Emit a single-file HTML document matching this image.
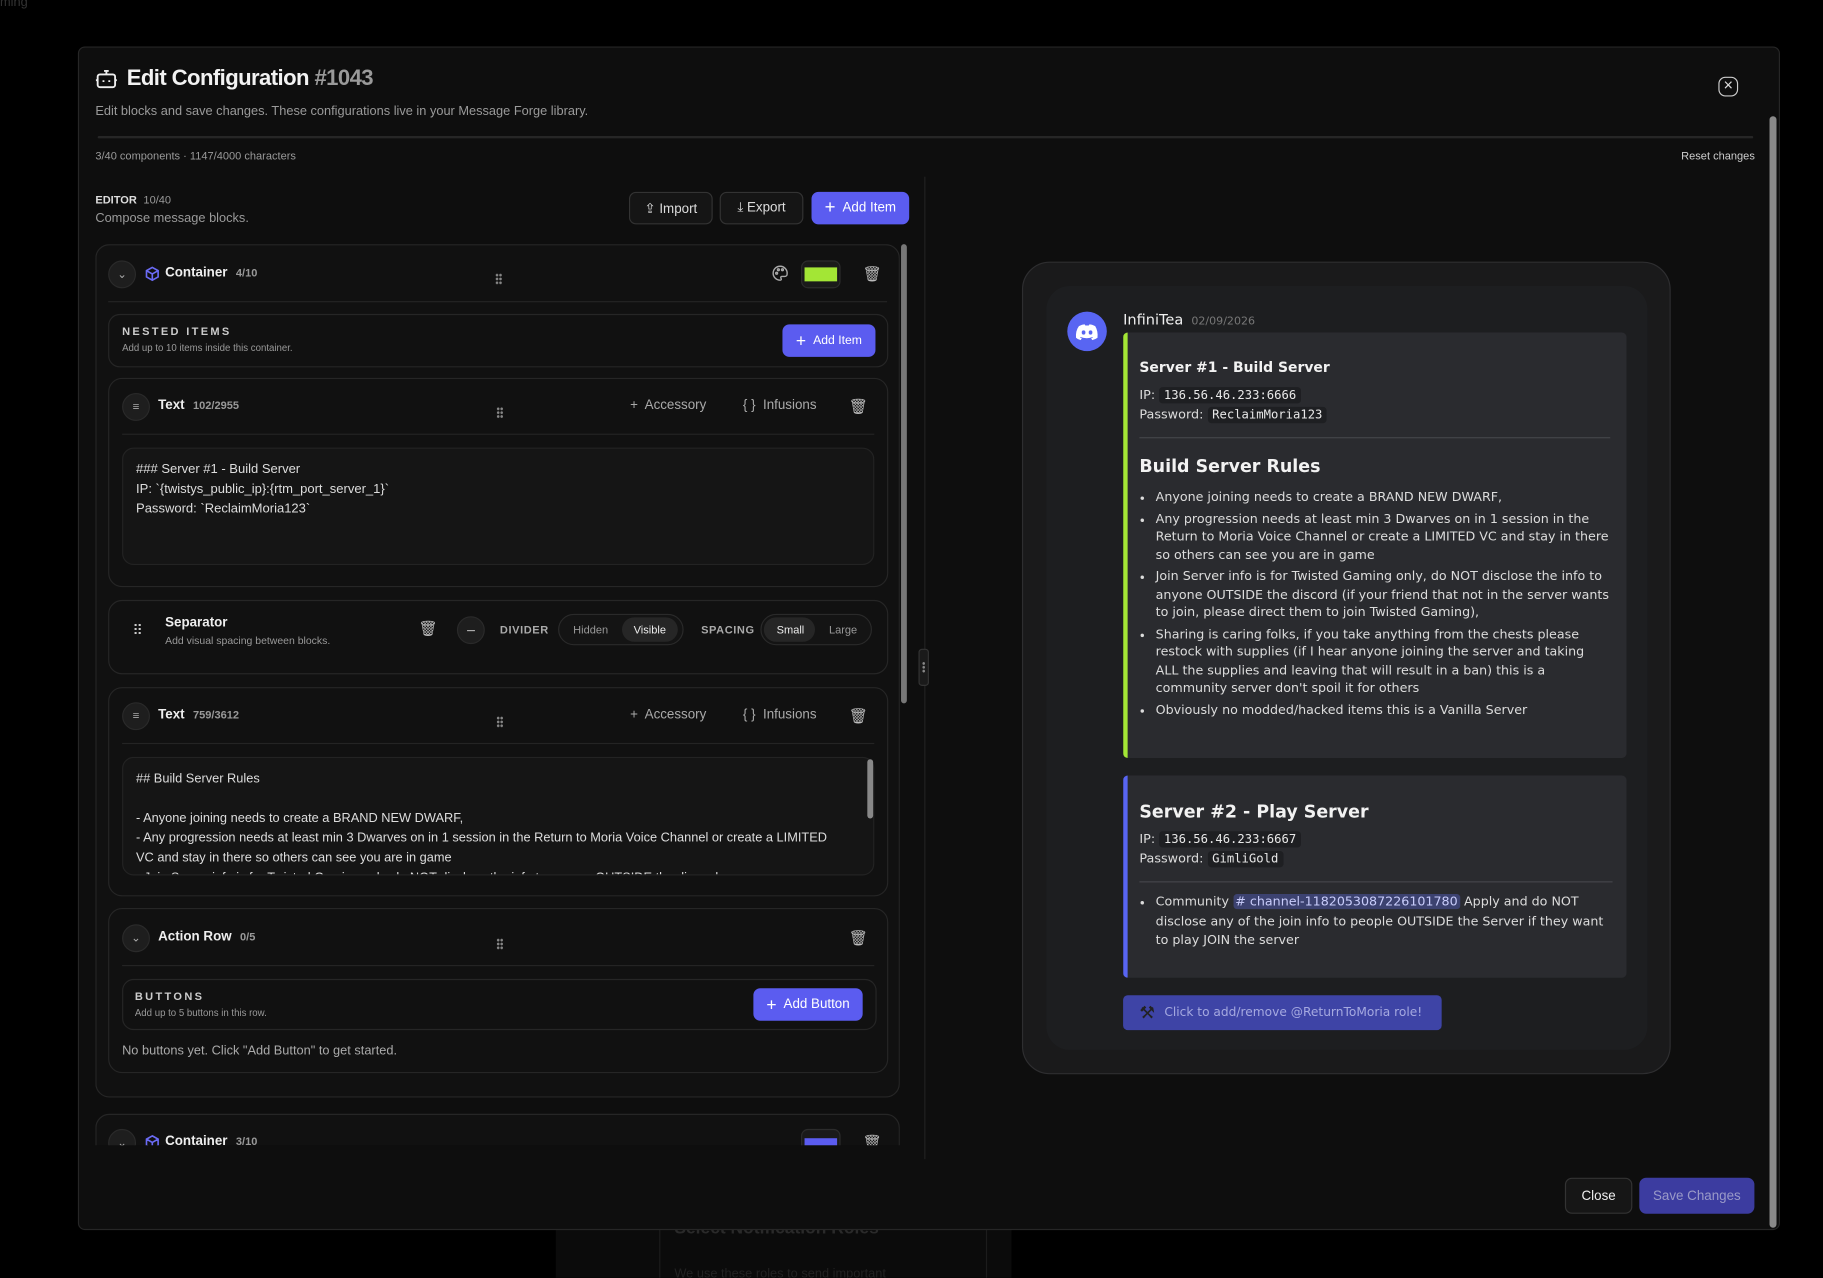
<!DOCTYPE html>
<html><head><meta charset="utf-8">
<style>
html,body{margin:0;padding:0;background:#000;width:1823px;height:1278px;overflow:hidden}
#w{position:absolute;left:0;top:0;width:1568px;height:1099px;transform:scale(1.16263);transform-origin:0 0;font-family:"Liberation Sans",sans-serif;color:#e6e6e6;background:#000;border-radius:0 0 22px 22px;overflow:hidden}
.a{position:absolute}
.modal{left:67px;top:40px;width:1462px;height:1016px;background:#0e0e0e;border:1px solid #262626;border-radius:6px}
.g{color:#9a9a9a}
.btn{position:absolute;border:1px solid #333;background:#151515;border-radius:6px;font-size:11.5px;display:flex;align-items:center;justify-content:center;gap:6px;color:#ddd}
.blue{background:#5b5cf0;border-color:#5b5cf0;color:#fff}
.card{position:absolute;border:1px solid #262626;border-radius:12px;background:#111}
.ln{position:absolute;height:1px;background:#242424}
.t12b{font-size:11.5px;font-weight:bold;color:#eee}
.sm{font-size:9.5px;color:#999}
.circ{position:absolute;width:22px;height:22px;border-radius:50%;background:#1e1e1e;border:1px solid #2a2a2a;display:flex;align-items:center;justify-content:center;color:#aaa;font-size:10px}
.dots{position:absolute;width:6px;height:10px;background:radial-gradient(circle,#888 1px,transparent 1.3px) 0 0/3px 3.3px}
.ta{position:absolute;background:#151515;border:1px solid #232323;border-radius:10px;font-size:11.2px;color:#ddd;line-height:17px;padding:10px 11px;box-sizing:border-box;overflow:hidden}
.d{font-family:"DejaVu Sans",sans-serif}
.code{font-family:"DejaVu Sans Mono",monospace;background:#1e1f22;padding:1px 4px;border-radius:3px;font-size:10.5px;color:#e8e8e8}
ul{margin:0;padding-left:14px}
li{margin-bottom:3px}
.tr{font-size:13px;color:#bbb}
</style></head><body><div id="w">
<div class="a" style="left:0;top:-4px;font-size:11px;color:#333">ming</div>
<div class="a" style="left:478px;top:1040px;width:392px;height:70px;background:#0b0b0b"></div>
<div class="a" style="left:567px;top:1040px;width:280px;height:70px;border-left:1px solid #1c1c1c;border-right:1px solid #1c1c1c"></div>
<div class="a" style="left:580px;top:1048px;font-size:15px;font-weight:bold;color:#2a2a2a">Select Notification Roles</div>
<div class="a" style="left:580px;top:1090px;font-size:11px;color:#222">We use these roles to send important</div>

<div class="a modal"></div>
<svg class="a" style="left:82px;top:59px" width="19" height="18" viewBox="0 0 19 18" fill="none" stroke="#eee" stroke-width="1.6"><rect x="2" y="5" width="15" height="11" rx="2"/><path d="M9.5 5V2M7.5 2h4M7 10v1.5M12 10v1.5M0.5 10h1.5M17 10h1.5"/></svg>
<div class="a" style="left:109px;top:57px;font-size:19px;font-weight:bold;color:#f2f2f2;letter-spacing:-0.5px">Edit Configuration <span style="color:#9a9a9a">#1043</span></div>
<div class="a g" style="left:82px;top:90px;font-size:11px">Edit blocks and save changes. These configurations live in your Message Forge library.</div>
<div class="a" style="left:84px;top:117px;width:1424px;height:2px;background:#262626;border-radius:1px"></div>
<div class="a g" style="left:82px;top:129px;font-size:9.5px">3/40 components · 1147/4000 characters</div>
<div class="a" style="left:1446px;top:129px;font-size:9.5px;color:#ccc">Reset changes</div>
<div class="a" style="left:1478px;top:66px;width:17px;height:17px;border:1.5px solid #ccc;border-radius:6px;box-sizing:border-box;color:#ddd;font-size:14px;line-height:13px;text-align:center">×</div>
<div class="a" style="left:1522px;top:100px;width:6px;height:956px;background:#8a8a8a;border-radius:3px"></div>

<div class="a" style="left:82px;top:167px;font-size:9.5px;font-weight:bold;color:#ddd">EDITOR <span style="font-weight:normal;color:#999;margin-left:3px">10/40</span></div>
<div class="a g" style="left:82px;top:182px;font-size:11px">Compose message blocks.</div>
<div class="btn" style="left:541px;top:165px;width:70px;height:26px">⇪ Import</div>
<div class="btn" style="left:619px;top:165px;width:70px;height:26px">⤓ Export</div>
<div class="btn blue" style="left:698px;top:165px;width:82px;height:26px"><span style="font-size:16px">+</span> Add Item</div>

<div class="a" style="left:795px;top:152px;width:1px;height:845px;background:#222"></div>
<div class="a" style="left:790px;top:558px;width:9px;height:32px;background:#1a1a1a;border:1px solid #333;border-radius:3px;box-sizing:border-box"></div>
<div class="dots" style="left:793px;top:569px;width:3px"></div>

<div class="a" style="left:775px;top:210px;width:5px;height:395px;background:#777;border-radius:3px"></div>
<div class="a" style="left:82px;top:210px;width:692px;height:775px;overflow:hidden">
 <div class="card" style="left:0;top:0;width:690px;height:732px">
  <div class="circ" style="left:10px;top:13px">⌄</div>
  <svg class="a" style="left:42px;top:18px" width="12" height="13" viewBox="0 0 12 13" fill="none" stroke="#6b6bf5" stroke-width="1.4"><path d="M6 1l5 2.8v5.4L6 12 1 9.2V3.8zM1 3.8l5 2.8 5-2.8M6 6.6V12"/></svg>
  <div class="a t12b" style="left:59px;top:18px">Container <span class="sm" style="margin-left:4px">4/10</span></div>
  <div class="dots" style="left:343px;top:24px"></div>
  <svg class="a" style="left:581px;top:17px" width="14" height="14" viewBox="0 0 14 14" fill="none" stroke="#aaa" stroke-width="1.2"><path d="M7 1a6 6 0 1 0 0 12c1 0 1.3-.8.8-1.5s-.3-1.7.7-1.7H11a2 2 0 0 0 2-2A6 6 0 0 0 7 1z"/><circle cx="4" cy="7" r=".8"/><circle cx="5.5" cy="4" r=".8"/><circle cx="9" cy="4" r=".8"/></svg>
  <div class="a" style="left:606px;top:13px;width:34px;height:24px;background:#1a1a1a;border:1px solid #2c2c2c;border-radius:6px;box-sizing:border-box"></div>
  <div class="a" style="left:609px;top:19px;width:28px;height:12px;background:#a3e635"></div>
  <div class="a tr" style="left:659px;top:17px">🗑︎</div>
  <div class="ln" style="left:10px;top:48px;width:670px"></div>

  <div class="card" style="left:10px;top:59px;width:669px;height:44px;border-radius:10px;background:#111">
   <div class="a" style="left:11px;top:9px;font-size:9.5px;font-weight:bold;letter-spacing:2px;color:#ccc">NESTED ITEMS</div>
   <div class="a" style="left:11px;top:23px;font-size:8.3px;color:#999">Add up to 10 items inside this container.</div>
   <div class="btn blue" style="left:579px;top:8px;width:78px;height:26px;font-size:10.5px"><span style="font-size:15px">+</span> Add Item</div>
  </div>

  <div class="card" style="left:10px;top:114px;width:669px;height:178px">
   <div class="circ" style="left:11px;top:12px">≡</div>
   <div class="a t12b" style="left:42px;top:17px">Text <span class="sm" style="margin-left:4px">102/2955</span></div>
   <div class="dots" style="left:333px;top:24px"></div>
   <div class="a" style="left:448px;top:17px;font-size:11.5px;color:#aaa">+&nbsp; Accessory</div>
   <div class="a" style="left:545px;top:17px;font-size:11.5px;color:#aaa">{ }&nbsp; Infusions</div>
   <div class="a tr" style="left:636px;top:16px">🗑︎</div>
   <div class="ln" style="left:11px;top:47px;width:647px"></div>
   <div class="ta" style="left:11px;top:59px;width:647px;height:101px">### Server #1 - Build Server<br>IP: `{twistys_public_ip}:{rtm_port_server_1}`<br>Password: `ReclaimMoria123`</div>
  </div>

  <div class="card" style="left:10px;top:305px;width:669px;height:62px">
   <div class="a" style="left:20px;top:18px;font-size:12px;color:#ccc;letter-spacing:-1px">⠿</div>
   <div class="a t12b" style="left:48px;top:13px">Separator</div>
   <div class="a sm" style="left:48px;top:29px;font-size:9px">Add visual spacing between blocks.</div>
   <div class="a tr" style="left:266px;top:16px">🗑︎</div>
   <div class="circ" style="left:299px;top:13px;font-size:14px">−</div>
   <div class="a" style="left:336px;top:20px;font-size:9.5px;font-weight:bold;color:#aaa;letter-spacing:.5px">DIVIDER</div>
   <div class="a" style="left:386px;top:11px;width:108px;height:27px;border:1px solid #2a2a2a;border-radius:14px;background:#141414;box-sizing:border-box"></div>
   <div class="a" style="left:399px;top:20px;font-size:9.5px;color:#999">Hidden</div>
   <div class="a" style="left:441px;top:14px;width:48px;height:21px;border-radius:11px;background:#262626"></div>
   <div class="a" style="left:451px;top:20px;font-size:9.5px;color:#eee">Visible</div>
   <div class="a" style="left:509px;top:20px;font-size:9.5px;font-weight:bold;color:#aaa;letter-spacing:.5px">SPACING</div>
   <div class="a" style="left:560px;top:11px;width:96px;height:27px;border:1px solid #2a2a2a;border-radius:14px;background:#141414;box-sizing:border-box"></div>
   <div class="a" style="left:563px;top:14px;width:44px;height:21px;border-radius:11px;background:#262626"></div>
   <div class="a" style="left:574px;top:20px;font-size:9.5px;color:#eee">Small</div>
   <div class="a" style="left:619px;top:20px;font-size:9.5px;color:#999">Large</div>
  </div>

  <div class="card" style="left:10px;top:380px;width:669px;height:178px">
   <div class="circ" style="left:11px;top:12px">≡</div>
   <div class="a t12b" style="left:42px;top:17px">Text <span class="sm" style="margin-left:4px">759/3612</span></div>
   <div class="dots" style="left:333px;top:24px"></div>
   <div class="a" style="left:448px;top:17px;font-size:11.5px;color:#aaa">+&nbsp; Accessory</div>
   <div class="a" style="left:545px;top:17px;font-size:11.5px;color:#aaa">{ }&nbsp; Infusions</div>
   <div class="a tr" style="left:636px;top:16px">🗑︎</div>
   <div class="ln" style="left:11px;top:47px;width:647px"></div>
   <div class="ta" style="left:11px;top:59px;width:647px;height:102px;font-size:11px;padding-right:24px">## Build Server Rules<br><br>- Anyone joining needs to create a BRAND NEW DWARF,<br>- Any progression needs at least min 3 Dwarves on in 1 session in the Return to Moria Voice Channel or create a LIMITED VC and stay in there so others can see you are in game<br>- Join Server info is for Twisted Gaming only, do NOT disclose the info to anyone OUTSIDE the discord</div>
   <div class="a" style="left:652px;top:61px;width:5px;height:51px;background:#888;border-radius:3px"></div>
  </div>

  <div class="card" style="left:10px;top:570px;width:669px;height:140px">
   <div class="circ" style="left:11px;top:13px">⌄</div>
   <div class="a t12b" style="left:42px;top:18px">Action Row <span class="sm" style="margin-left:4px">0/5</span></div>
   <div class="dots" style="left:333px;top:25px"></div>
   <div class="a tr" style="left:636px;top:17px">🗑︎</div>
   <div class="ln" style="left:11px;top:48px;width:647px"></div>
   <div class="card" style="left:11px;top:60px;width:647px;height:42px;border-radius:10px">
    <div class="a" style="left:10px;top:9px;font-size:9.5px;font-weight:bold;letter-spacing:2px;color:#ccc">BUTTONS</div>
    <div class="a" style="left:10px;top:23px;font-size:8.3px;color:#999">Add up to 5 buttons in this row.</div>
    <div class="btn blue" style="left:542px;top:7px;width:92px;height:26px"><span style="font-size:15px">+</span> Add Button</div>
   </div>
   <div class="a" style="left:11px;top:116px;font-size:11px;color:#aaa">No buttons yet. Click "Add Button" to get started.</div>
  </div>
 </div>
 <div class="card" style="left:0;top:748px;width:690px;height:100px">
  <div class="circ" style="left:10px;top:12px">⌄</div>
  <svg class="a" style="left:42px;top:17px" width="12" height="13" viewBox="0 0 12 13" fill="none" stroke="#6b6bf5" stroke-width="1.4"><path d="M6 1l5 2.8v5.4L6 12 1 9.2V3.8zM1 3.8l5 2.8 5-2.8M6 6.6V12"/></svg>
  <div class="a t12b" style="left:59px;top:17px">Container <span class="sm" style="margin-left:4px">3/10</span></div>
  <div class="a" style="left:606px;top:12px;width:34px;height:24px;background:#1a1a1a;border:1px solid #2c2c2c;border-radius:6px;box-sizing:border-box"></div>
  <div class="a" style="left:609px;top:20px;width:28px;height:12px;background:#5b5cf0"></div>
  <div class="a tr" style="left:659px;top:16px">🗑︎</div>
 </div>
</div>

<div class="btn" style="left:1346px;top:1013px;width:56px;height:29px;background:#161616;color:#eee">Close</div>
<div class="btn" style="left:1410px;top:1013px;width:97px;height:29px;background:#3c3ca0;border-color:#3c3ca0;color:#9a9ac8">Save Changes</div>

<div class="a" style="left:879px;top:225px;width:558px;height:699px;background:#1a1a1b;border:1px solid #2e2e30;border-radius:24px;box-sizing:border-box"></div>
<div class="a d" style="left:900px;top:246px;width:517px;height:657px;background:#1d1e20;border-radius:20px">
 <div class="a" style="left:18px;top:22px;width:34px;height:34px;border-radius:50%;background:#5865f2;display:flex;align-items:center;justify-content:center">
  <svg width="20" height="15" viewBox="0 0 20 15"><path d="M3 2.5Q6 1 8 1l.5 1h3l.5-1q2 0 5 1.5 2.5 4 2 10-2 1.5-4.5 2l-1-1.5 1.6-.8-.3-.3Q10 14 4.2 11.9l-.3.3 1.6.8-1 1.5Q2 14 .5 12.5 0 6.5 3 2.5z" fill="#fff"/><ellipse cx="7" cy="8" rx="1.6" ry="1.8" fill="#5865f2"/><ellipse cx="13" cy="8" rx="1.6" ry="1.8" fill="#5865f2"/></svg>
 </div>
 <div class="a" style="left:66px;top:21px;font-size:12.5px;color:#f0f0f0">InfiniTea <span style="font-size:9.5px;color:#777;margin-left:3px">02/09/2026</span></div>
 <div class="a" style="left:66px;top:40px;width:433px;height:366px;background:#2a2b2f;border-left:4px solid #a3e635;border-radius:4px;box-sizing:border-box;padding:23px 14px 0 10px;font-size:11px;color:#dcdcdc">
  <div style="font-weight:bold;font-size:12px;color:#f2f2f2">Server #1 - Build Server</div>
  <div style="margin-top:9px;line-height:16.5px">IP: <span class="code">136.56.46.233:6666</span><br>Password: <span class="code">ReclaimMoria123</span></div>
  <div style="height:1px;background:#45464b;margin:11px 0 15px"></div>
  <div style="font-weight:bold;font-size:15px;color:#f2f2f2;margin-bottom:10px">Build Server Rules</div>
  <ul style="line-height:15.5px;font-size:10.9px">
   <li>Anyone joining needs to create a BRAND NEW DWARF,</li>
   <li>Any progression needs at least min 3 Dwarves on in 1 session in the Return to Moria Voice Channel or create a LIMITED VC and stay in there so others can see you are in game</li>
   <li>Join Server info is for Twisted Gaming only, do NOT disclose the info to anyone OUTSIDE the discord (if your friend that not in the server wants to join, please direct them to join Twisted Gaming),</li>
   <li>Sharing is caring folks, if you take anything from the chests please restock with supplies (if I hear anyone joining the server and taking ALL the supplies and leaving that will result in a ban) this is a community server don't spoil it for others</li>
   <li>Obviously no modded/hacked items this is a Vanilla Server</li>
  </ul>
 </div>
 <div class="a" style="left:66px;top:421px;width:433px;height:174px;background:#2a2b2f;border-left:4px solid #5865f2;border-radius:4px;box-sizing:border-box;padding:22px 12px 0 10px;font-size:11px;color:#dcdcdc">
  <div style="font-weight:bold;font-size:15px;color:#f2f2f2">Server #2 - Play Server</div>
  <div style="margin-top:7px;line-height:16.5px">IP: <span class="code">136.56.46.233:6667</span><br>Password: <span class="code">GimliGold</span></div>
  <div style="height:1px;background:#45464b;margin:11px 0 9px"></div>
  <ul style="line-height:16.5px;font-size:10.9px"><li>Community <span style="background:#3c4270;color:#c9cdfb;padding:0 2px;border-radius:3px"># channel-1182053087226101780</span> Apply and do NOT disclose any of the join info to people OUTSIDE the Server if they want to play JOIN the server</li></ul>
 </div>
 <div class="a" style="left:66px;top:610px;width:274px;height:30px;background:#3e44a6;border-radius:4px;font-size:10.5px;color:#a5a9e0;display:flex;align-items:center;padding-left:14px;box-sizing:border-box;gap:8px">
  <span style="font-size:15px;color:#222">⚒</span>Click to add/remove @ReturnToMoria role!</div>
</div>
</div></body></html>
